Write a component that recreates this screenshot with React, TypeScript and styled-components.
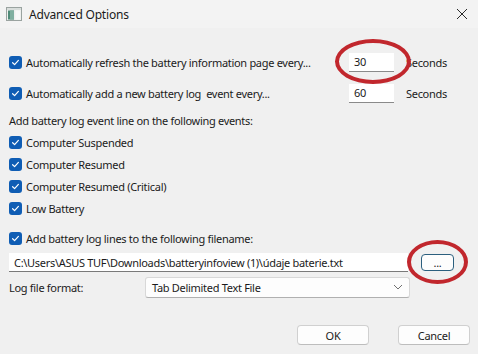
import React from 'react';
import styled, { createGlobalStyle } from 'styled-components';

const GlobalStyle = createGlobalStyle`
  html, body {
    margin: 0;
    padding: 0;
    background: #f0f0f0;
  }
  body {
    font-family: "Noto Sans", "Liberation Sans", sans-serif;
    font-size: 11px;
    letter-spacing: -0.3px;
    color: #1b1b1b;
  }
`;

const Window = styled.div`
  position: relative;
  width: 478px;
  height: 354px;
  background: #f0f0f0;
  overflow: hidden;
  display: flex;
  flex-direction: column;
`;

const TitleBar = styled.div`
  height: 28px;
  display: flex;
  align-items: center;
  padding: 0 9px 0 6px;
  background: #f3f3f3;
  font-size: 12px;
  letter-spacing: -0.2px;
  color: #1a1a1a;
`;

const TitleText = styled.span`
  margin-left: 7px;
  flex: 1;
`;

const CloseButton = styled.div`
  width: 14px;
  height: 14px;
  display: flex;
  align-items: center;
  justify-content: center;
`;

const Body = styled.div`
  display: flex;
  flex-direction: column;
  padding: 0 8px 0 9px;
`;

const Row = styled.div<{ $mt: number; $h: number }>`
  display: flex;
  align-items: center;
  margin-top: ${p => p.$mt}px;
  height: ${p => p.$h}px;
`;

const IntervalRow = styled.div<{ $mt: number }>`
  display: grid;
  grid-template-columns: 328px 45px auto;
  column-gap: 12px;
  align-items: center;
  margin-top: ${p => p.$mt}px;
  height: 20px;
`;

const Check = styled.span`
  width: 13px;
  height: 13px;
  border-radius: 3px;
  background: #0f5db4;
  display: inline-flex;
  align-items: center;
  justify-content: center;
  flex-shrink: 0;
  margin-right: 4px;
`;

const CheckLabel = styled.label`
  display: flex;
  align-items: center;
  white-space: nowrap;
  min-width: 0;
`;

const NumberBox = styled.div`
  height: 19px;
  background: #ffffff;
  border-bottom: 1px solid #8a8a8a;
  box-sizing: border-box;
  display: flex;
  align-items: center;
  padding-left: 5px;
`;

const PathBox = styled.div`
  width: 399px;
  height: 19px;
  background: #ffffff;
  border-bottom: 1px solid #7a7a7a;
  box-sizing: border-box;
  display: flex;
  align-items: center;
  padding-left: 5px;
  white-space: nowrap;
  overflow: hidden;
`;

const BrowseSlot = styled.div`
  margin-left: 13px;
  display: flex;
  align-items: center;
`;

const Button = styled.div<{ $w: number; $focus?: boolean }>`
  width: ${p => p.$w}px;
  height: ${p => (p.$focus ? 17 : 20)}px;
  box-sizing: border-box;
  border: 1px solid ${p => (p.$focus ? '#2b5f7e' : '#d0d0d0')};
  border-bottom-color: ${p => (p.$focus ? '#2b5f7e' : '#bdbdbd')};
  border-radius: 4px;
  background: #fdfdfd;
  display: flex;
  align-items: center;
  justify-content: center;
  font-size: 11px;
`;

const FormatLabel = styled.span`
  width: 136px;
`;

const Select = styled.div`
  width: 265px;
  height: 21px;
  box-sizing: border-box;
  background: #fdfdfd;
  border: 1px solid #d8d8d8;
  border-bottom-color: #b0b0b0;
  border-radius: 3px;
  display: flex;
  align-items: center;
  justify-content: space-between;
  padding: 0 6px 0 6px;
`;

const ButtonRow = styled.div`
  display: flex;
  justify-content: flex-end;
  gap: 29px;
  margin-top: 27px;
`;

const Highlight = styled.div<{ $x: number; $y: number; $w: number; $h: number }>`
  position: absolute;
  left: ${p => p.$x}px;
  top: ${p => p.$y}px;
  width: ${p => p.$w}px;
  height: ${p => p.$h}px;
  box-sizing: border-box;
  border: 4px solid #c1272d;
  border-radius: 50%;
  pointer-events: none;
`;

const CheckMark = () => (
  <svg width="9" height="9" viewBox="0 0 9 9">
    <path d="M1.6 4.7 L3.6 6.6 L7.4 2.4" fill="none" stroke="#fff" strokeWidth="1.2" strokeLinecap="round" strokeLinejoin="round" />
  </svg>
);

const AppIcon = () => (
  <svg width="16" height="14" viewBox="0 0 16 14">
    <rect x="0.5" y="0.5" width="15" height="13" fill="#eef0ef" stroke="#9aa3a0" />
    <rect x="1" y="1" width="14" height="2" fill="#d9dedc" />
    <rect x="2" y="3.5" width="6" height="9" fill="#4f8a78" />
    <rect x="4" y="3.5" width="4" height="9" fill="#7fb0a0" />
    <rect x="9.5" y="3.5" width="4.5" height="9" fill="#f7f9f8" />
  </svg>
);

const CloseIcon = () => (
  <svg width="12" height="12" viewBox="0 0 12 12">
    <path d="M1 1 L11 11 M11 1 L1 11" stroke="#2a2a2a" strokeWidth="1" />
  </svg>
);

const Chevron = () => (
  <svg width="10" height="6" viewBox="0 0 10 6">
    <path d="M1 1 L5 5 L9 1" fill="none" stroke="#707070" strokeWidth="1" />
  </svg>
);

const CheckItem = ({ children }: { children: React.ReactNode }) => (
  <CheckLabel>
    <Check><CheckMark /></Check>
    {children}
  </CheckLabel>
);

const events = ['Computer Suspended', 'Computer Resumed', 'Computer Resumed (Critical)', 'Low Battery'];

export default function App() {
  return (
    <>
      <GlobalStyle />
      <Window>
        <TitleBar>
          <AppIcon />
          <TitleText>Advanced Options</TitleText>
          <CloseButton><CloseIcon /></CloseButton>
        </TitleBar>
        <Body>
          <IntervalRow $mt={24}>
            <CheckItem>Automatically refresh the battery information page every...</CheckItem>
            <NumberBox>30</NumberBox>
            <span>Seconds</span>
          </IntervalRow>
          <IntervalRow $mt={11}>
            <CheckItem>Automatically add a new battery log&nbsp; event every...</CheckItem>
            <NumberBox>60</NumberBox>
            <span>Seconds</span>
          </IntervalRow>
          <Row $mt={9} $h={16}>Add battery log event line on the following events:</Row>
          {events.map((e, i) => (
            <Row key={e} $mt={i === 0 ? 4 : 2} $h={20}>
              <CheckItem>{e}</CheckItem>
            </Row>
          ))}
          <Row $mt={10} $h={20}>
            <CheckItem>Add battery log lines to the following filename:</CheckItem>
          </Row>
          <Row $mt={5} $h={19}>
            <PathBox>C:\Users\ASUS TUF\Downloads\batteryinfoview (1)\údaje baterie.txt</PathBox>
            <BrowseSlot>
              <Button $w={33} $focus>...</Button>
            </BrowseSlot>
          </Row>
          <Row $mt={4} $h={22}>
            <FormatLabel>Log file format:</FormatLabel>
            <Select>
              <span>Tab Delimited Text File</span>
              <Chevron />
            </Select>
          </Row>
          <ButtonRow>
            <Button $w={72}>OK</Button>
            <Button $w={72}>Cancel</Button>
          </ButtonRow>
        </Body>
        <Highlight $x={335} $y={39} $w={76} $h={45} />
        <Highlight $x={407} $y={240} $w={61} $h={44} />
      </Window>
    </>
  );
}
